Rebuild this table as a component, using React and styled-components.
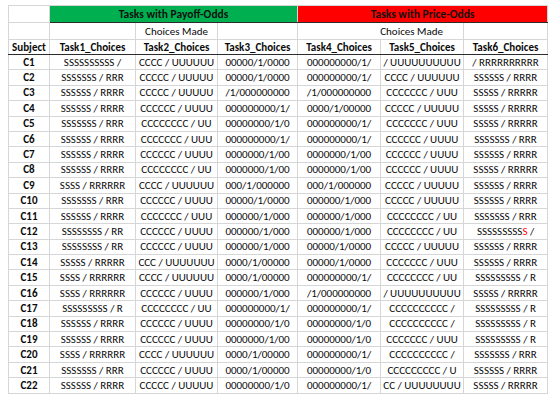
import React from 'react';
import styled, { createGlobalStyle } from 'styled-components';

const GlobalStyle = createGlobalStyle`
  html, body {
    margin: 0;
    padding: 0;
    background: #ffffff;
  }
  body {
    font-family: Carlito, Lato, "Liberation Sans", sans-serif;
  }
`;

const Page = styled.div`
  width: 550px;
  height: 400px;
  padding: 5px 0 0 8px;
  box-sizing: border-box;
  overflow: hidden;
`;

const Sheet = styled.table`
  border-collapse: collapse;
  table-layout: fixed;
  width: 539px;
  font-size: 11px;
  color: #0a0a0a;
`;

const Row = styled.tr`
  height: ${(p) => p.$h}px;
`;

const Cell = styled.td`
  border: 1px solid #d6d6d6;
  padding: 0;
  text-align: center;
  vertical-align: middle;
  white-space: nowrap;
  overflow: hidden;
  line-height: 1;
  font-weight: ${(p) => (p.$bold ? 700 : 400)};
  border-left: ${(p) => (p.$split ? '1.5px solid #2b2b2b' : '1px solid #d6d6d6')};
  border-bottom: ${(p) => (p.$rule ? '1.5px solid #2b2b2b' : '1px solid #d6d6d6')};
`;

const Band = styled.td`
  padding: 0;
  text-align: center;
  vertical-align: middle;
  font-weight: 700;
  font-size: 11.5px;
  color: #111;
  background: ${(p) => (p.$tone === 'red' ? '#ff0000' : '#00b050')};
  border: 1px solid #d6d6d6;
  border-bottom: 1.5px solid #2b2b2b;
`;

const Flag = styled.span`
  color: #ff0000;
`;

const widths = [41, 86, 82, 80, 83, 83, 84];

const rows = [
  ['C1', 'SSSSSSSSSS /', 'CCCC / UUUUUU', '00000/1/0000', '000000000/1/', '/ UUUUUUUUUU', '/ RRRRRRRRRR'],
  ['C2', 'SSSSSSS / RRR', 'CCCCC / UUUUU', '00000/1/0000', '000000000/1/', 'CCCC / UUUUUU', 'SSSSSS / RRRR'],
  ['C3', 'SSSSSS / RRRR', 'CCCCC / UUUUU', '/1/000000000', '/1/000000000', 'CCCCCCC / UUU', 'SSSSS / RRRRR'],
  ['C4', 'SSSSSS / RRRR', 'CCCCCC / UUUU', '000000000/1/', '0000/1/00000', 'CCCCC / UUUUU', 'SSSSS / RRRRR'],
  ['C5', 'SSSSSSS / RRR', 'CCCCCCCC / UU', '00000000/1/0', '000000000/1/', 'CCCCCCC / UUU', 'SSSSS / RRRRR'],
  ['C6', 'SSSSSS / RRRR', 'CCCCCCC / UUU', '000000000/1/', '000000000/1/', 'CCCCCC / UUUU', 'SSSSSSS / RRR'],
  ['C7', 'SSSSSS / RRRR', 'CCCCCC / UUUU', '0000000/1/00', '0000000/1/00', 'CCCCCC / UUUU', 'SSSSSS / RRRR'],
  ['C8', 'SSSSSS / RRRR', 'CCCCCCCC / UU', '0000000/1/00', '0000000/1/00', 'CCCCCC / UUUU', 'SSSSS / RRRRR'],
  ['C9', 'SSSS / RRRRRR', 'CCCC / UUUUUU', '000/1/000000', '000/1/000000', 'CCCCC / UUUUU', 'SSSSSS / RRRR'],
  ['C10', 'SSSSSSS / RRR', 'CCCCCC / UUUU', '00000/1/0000', '000000/1/000', 'CCCCC / UUUUU', 'SSSSSS / RRRR'],
  ['C11', 'SSSSSS / RRRR', 'CCCCCCC / UUU', '000000/1/000', '000000/1/000', 'CCCCCCCC / UU', 'SSSSSSS / RRR'],
  ['C12', 'SSSSSSSS / RR', 'CCCCCC / UUUU', '000000/1/000', '000000/1/000', 'CCCCCCCC / UU', null],
  ['C13', 'SSSSSSSS / RR', 'CCCCCC / UUUU', '000000/1/000', '00000/1/0000', 'CCCCC / UUUUU', 'SSSSSS / RRRR'],
  ['C14', 'SSSSS / RRRRR', 'CCC / UUUUUUU', '0000/1/00000', '00000/1/0000', 'CCCCCCC / UUU', 'SSSSSS / RRRR'],
  ['C15', 'SSSS / RRRRRR', 'CCCC / UUUUUU', '0000/1/00000', '000000000/1/', 'CCCCCCCC / UU', 'SSSSSSSSS / R'],
  ['C16', 'SSSS / RRRRRR', 'CCCCCC / UUUU', '000000/1/000', '/1/000000000', '/ UUUUUUUUUU', 'SSSSS / RRRRR'],
  ['C17', 'SSSSSSSSS / R', 'CCCCCCCC / UU', '000000000/1/', '000000000/1/', 'CCCCCCCCCC /', 'SSSSSSSSS / R'],
  ['C18', 'SSSSSS / RRRR', 'CCCCCC / UUUU', '00000000/1/0', '00000000/1/0', 'CCCCCCCCCC /', 'SSSSSSSSS / R'],
  ['C19', 'SSSSSS / RRRR', 'CCCCCC / UUUU', '0000000/1/00', '00000000/1/0', 'CCCCCCC / UUU', 'SSSSSSSSS / R'],
  ['C20', 'SSSS / RRRRRR', 'CCCC / UUUUUU', '0000/1/00000', '000000000/1/', 'CCCCCCCCCC /', 'SSSSSSS / RRR'],
  ['C21', 'SSSSSSS / RRR', 'CCCCCC / UUUU', '0000/1/00000', '00000000/1/0', 'CCCCCCCCC / U', 'SSSSSS / RRRR'],
  ['C22', 'SSSSSS / RRRR', 'CCCCC / UUUUU', '00000000/1/0', '000000000/1/', 'CC / UUUUUUUU', 'SSSSS / RRRRR'],
];

const headers = ['Subject', 'Task1_Choices', 'Task2_Choices', 'Task3_Choices', 'Task4_Choices', 'Task5_Choices', 'Task6_Choices'];

const App = () => {
  return (
    <Page>
      <GlobalStyle />
      <Sheet>
        <colgroup>
          {widths.map((w, i) => (
            <col key={i} style={{ width: w }} />
          ))}
        </colgroup>
        <tbody>
          <Row $h={17}>
            <Cell />
            <Band colSpan={3} $tone="green">Tasks with Payoff-Odds</Band>
            <Band colSpan={3} $tone="red">Tasks with Price-Odds</Band>
          </Row>
          <Row $h={17}>
            <Cell />
            <Cell />
            <Cell>Choices Made</Cell>
            <Cell />
            <Cell $split colSpan={2} style={{ textAlign: 'right', paddingRight: 20 }}>Choices Made</Cell>
            <Cell />
          </Row>
          <Row $h={15}>
            {headers.map((h, i) => (
              <Cell key={h} $bold $rule $split={i === 4}>{h}</Cell>
            ))}
          </Row>
          {rows.map((r) => (
            <Row key={r[0]} $h={15.4}>
              {r.map((v, i) => (
                <Cell key={i} $bold={i === 0} $split={i === 4}>
                  {v === null ? (
                    <>
                      SSSSSSSSS<Flag>S</Flag> /
                    </>
                  ) : (
                    v
                  )}
                </Cell>
              ))}
            </Row>
          ))}
        </tbody>
      </Sheet>
    </Page>
  );
};

export default App;
